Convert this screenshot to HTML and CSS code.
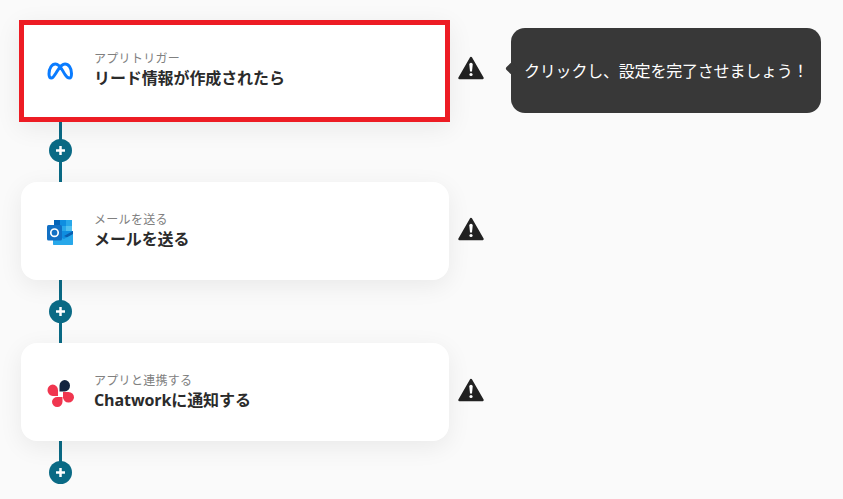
FILE: index.html
```html
<!DOCTYPE html>
<html lang="ja">
<head>
    <meta charset="UTF-8">
    <meta name="viewport" content="width=device-width, initial-scale=1.0">
    <title>フロー</title>
    <link rel="stylesheet" href="styles.css">
</head>
<body>
    <div class="flow">
        <div class="step">
            <div class="card card--active">
                <svg class="card__icon" viewBox="0 0 26 18" width="26" height="18">
                    <path class="meta" d="M2 12C2 6 5 2 8.500 2 13 2 15 8 18 12.500 19.500 15 21 16 22.500 16 24.500 16 24.500 13.500 24.500 11.500 24.500 6 21.500 2 18 2 13.500 2 11 8 8 12.500 6.500 15 5.500 16 4.500 16 3 16 2 14.500 2 12Z"/>
                </svg>
                <div class="card__text">
                    <div class="card__label">アプリトリガー</div>
                    <div class="card__title">リード情報が作成されたら</div>
                </div>
            </div>
            <svg class="warn" viewBox="0 0 26 24" width="26" height="24">
                <path class="warn__body" d="M13 2 L24.500 22 H1.500 Z"/>
                <path class="warn__mark" d="M11.300 8.500a1.700 1.700 0 0 1 3.400 0L14 15.500h-2z"/>
                <circle class="warn__mark" cx="13" cy="18.500" r="1.600"/>
            </svg>
            <div class="tooltip">クリックし、設定を完了させましょう！</div>
        </div>
        <div class="connector">
            <svg class="connector__plus" viewBox="0 0 23 23" width="23" height="23"><path d="M11.500 7v9M7 11.500h9"/></svg>
        </div>

        <div class="step">
            <div class="card">
                <svg class="card__icon" viewBox="0 0 26 25" width="26" height="25">
                    <rect x="7" y="0" width="18" height="14" rx="1" fill="#0f78d4"/>
                    <rect x="7" y="0" width="6" height="6" fill="#0364b8"/>
                    <rect x="13" y="0" width="6" height="6" fill="#0f8ee0"/>
                    <rect x="19" y="0" width="6" height="6" fill="#28a8ea"/>
                    <rect x="13" y="6" width="6" height="6" fill="#28a8ea"/>
                    <rect x="19" y="6" width="6" height="6" fill="#50c0f0"/>
                    <path d="M6 11 26 11V23.500A1.500 1.500 0 0 1 24.500 25H7.500A1.500 1.500 0 0 1 6 23.500Z" fill="#0f8ee0"/>
                    <path d="M26 11V20L17 16Z" fill="#0a5fb0"/>
                    <path d="M6 14 17 19 26 14V23.500A1.500 1.500 0 0 1 24.500 25H7.500A1.500 1.500 0 0 1 6 23.500Z" fill="#28a8ea"/>
                    <rect x="0" y="5" width="15" height="15.500" rx="1.500" fill="#1270c4"/>
                    <circle cx="7.500" cy="12.700" r="3.700" fill="none" stroke="#fff" stroke-width="1.700"/>
                </svg>
                <div class="card__text">
                    <div class="card__label">メールを送る</div>
                    <div class="card__title">メールを送る</div>
                </div>
            </div>
            <svg class="warn" viewBox="0 0 26 24" width="26" height="24">
                <path class="warn__body" d="M13 2 L24.500 22 H1.500 Z"/>
                <path class="warn__mark" d="M11.300 8.500a1.700 1.700 0 0 1 3.400 0L14 15.500h-2z"/>
                <circle class="warn__mark" cx="13" cy="18.500" r="1.600"/>
            </svg>
        </div>
        <div class="connector">
            <svg class="connector__plus" viewBox="0 0 23 23" width="23" height="23"><path d="M11.500 7v9M7 11.500h9"/></svg>
        </div>

        <div class="step">
            <div class="card">
                <svg class="card__icon card__icon--wide" viewBox="0 -1 27 28" width="27" height="28">
                    <path d="M12.500 11.500V5.700A5.250 5.700 0 0 1 23 5.700 5.250 5.800 0 0 1 17.750 11.500Z" fill="#13233f"/>
                    <path d="M11 16H5.750A5.250 5.750 0 0 1 5.750 4.500 5.250 5.750 0 0 1 11 10.250Z" fill="#f0364f"/>
                    <path d="M15.500 17V21.800A5.250 5.200 0 0 1 5 21.800 5.250 4.800 0 0 1 10.250 17Z" fill="#f0364f"/>
                    <path d="M16 12H21.500A5.500 5.250 0 0 1 21.500 22.500 5.500 5.250 0 0 1 16 17.250Z" fill="#f0364f"/>
                </svg>
                <div class="card__text">
                    <div class="card__label">アプリと連携する</div>
                    <div class="card__title">Chatworkに通知する</div>
                </div>
            </div>
            <svg class="warn" viewBox="0 0 26 24" width="26" height="24">
                <path class="warn__body" d="M13 2 L24.500 22 H1.500 Z"/>
                <path class="warn__mark" d="M11.300 8.500a1.700 1.700 0 0 1 3.400 0L14 15.500h-2z"/>
                <circle class="warn__mark" cx="13" cy="18.500" r="1.600"/>
            </svg>
        </div>
        <div class="connector connector--end">
            <svg class="connector__plus" viewBox="0 0 23 23" width="23" height="23"><path d="M11.500 7v9M7 11.500h9"/></svg>
        </div>
    </div>
</body>
</html>
```

FILE: styles.css
```css
html, body {
    height: 100%;
    overflow: hidden;
}

body {
    margin: 0;
    background-color: #fafafa;
    color: #2b2b2b;
    font-family: "Open Sans", "Noto Sans CJK JP", sans-serif;
}

.flow {
    padding: 21px 0 0 21px;
}

.step {
    display: flex;
    align-items: center;
    height: 98px;
}

.card {
    position: relative;
    z-index: 1;
    box-sizing: border-box;
    display: flex;
    align-items: center;
    width: 428px;
    height: 98px;
    flex-shrink: 0;
    padding: 2px 0 0 26px;
    background-color: #fff;
    border-radius: 16px;
    box-shadow: 0 6px 24px rgba(0, 0, 0, 0.07);
}

.card--active {
    width: 431px;
    height: 102px;
    margin: 2px -1px 0 -2px;
    padding: 0 0 0 23px;
    border: 5px solid #ed1c24;
    border-radius: 0;
}

.card__icon {
    flex-shrink: 0;
    margin-right: 21px;
}

.card__icon--wide {
    margin-right: 20px;
}

.card__text {
    margin-top: -2px;
}

.meta {
    fill: none;
    stroke: #0a7cff;
    stroke-width: 3;
}

.card__label {
    font-size: 12px;
    line-height: 16px;
    letter-spacing: 0.3px;
    color: #808080;
}

.card__title {
    font-size: 16px;
    line-height: 22px;
    letter-spacing: -0.1px;
    font-weight: 700;
}

.warn {
    flex-shrink: 0;
    margin: -4px 0 0 9px;
}

.warn__body {
    fill: #222;
    stroke: #222;
    stroke-width: 2.500;
    stroke-linejoin: round;
}

.warn__mark {
    fill: #fff;
}

.tooltip {
    position: relative;
    box-sizing: border-box;
    flex-shrink: 0;
    width: 310px;
    height: 85px;
    margin: 1px 0 0 27px;
    padding: 0 0 2px 13px;
    display: flex;
    align-items: center;
    background-color: #383838;
    border-radius: 14px;
    color: #fff;
    font-size: 16px;
    letter-spacing: -0.2px;
}

.tooltip::before {
    content: "";
    position: absolute;
    left: -4px;
    top: 36px;
    width: 9px;
    height: 9px;
    background-color: #383838;
    border-radius: 2px;
    transform: rotate(45deg);
}

.connector {
    display: flex;
    align-items: center;
    justify-content: center;
    width: 23px;
    height: 63px;
    margin-left: 28px;
    background: linear-gradient(#0a6a85, #0a6a85) center / 3px 100% no-repeat;
}

.connector--end {
    background-size: 3px 50%;
    background-position: center top;
}

.connector__plus {
    display: block;
    border-radius: 50%;
    background-color: #0a6a85;
}

.connector__plus path {
    fill: none;
    stroke: #fff;
    stroke-width: 2.500;
}
```
